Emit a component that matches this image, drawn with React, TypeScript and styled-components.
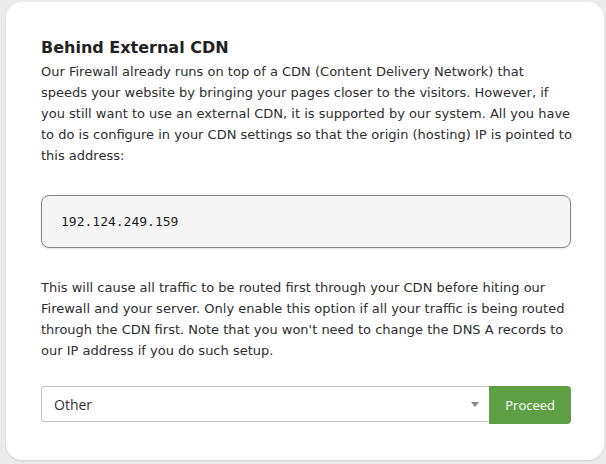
import styled, { createGlobalStyle } from "styled-components";

const GlobalStyle = createGlobalStyle`
  html, body {
    margin: 0;
    padding: 0;
    background: #ebebeb;
  }
  body {
    font-family: "DejaVu Sans", sans-serif;
    color: #2e2e2e;
  }
`;

const Page = styled.div`
  padding: 2px 2px 4px 6px;
`;

const Card = styled.section`
  box-sizing: border-box;
  width: 598px;
  height: 458px;
  background: #ffffff;
  border-radius: 16px;
  box-shadow: 0 1px 2px rgba(0, 0, 0, 0.12);
  padding: 33px 33px 0 35px;
`;

const Title = styled.h2`
  margin: 0;
  font-size: 16px;
  line-height: 26px;
  font-weight: bold;
  color: #222;
`;

// paragraphs run a little wider than the boxes below them
const Text = styled.p`
  margin: 0 -6px 0 0;
  font-size: 13px;
  line-height: 21px;
`;

const AddressBox = styled.div`
  margin: 29px 0 29px;
  height: 53px;
  box-sizing: border-box;
  display: flex;
  align-items: center;
  padding: 0 19px;
  background: #f5f5f5;
  border: 1px solid #858585;
  border-radius: 8px;
  box-shadow: 0 1px 2px rgba(0, 0, 0, 0.1);
  font-family: "DejaVu Sans Mono", monospace;
  font-size: 13px;
  color: #1e1e1e;
`;

const Actions = styled.div`
  display: flex;
  align-items: flex-start;
  margin-top: 25px;
`;

const SelectBox = styled.div`
  flex: 1;
  height: 36px;
  box-sizing: border-box;
  display: flex;
  align-items: center;
  justify-content: space-between;
  padding: 1px 10px 0 12px;
  border: 1px solid #c4c4c4;
  border-right: none;
  border-radius: 4px 0 0 4px;
  font-family: "Open Sans", sans-serif;
  font-size: 14px;
  color: #333;
`;

const Caret = styled.span`
  width: 0;
  height: 0;
  border-left: 4px solid transparent;
  border-right: 4px solid transparent;
  border-top: 5px solid #888;
`;

const ProceedButton = styled.button`
  height: 38px;
  padding: 0 16px;
  border: none;
  border-radius: 0 4px 4px 0;
  background: #5e9f45;
  color: #ffffff;
  font-family: "Open Sans", sans-serif;
  font-size: 13px;
  cursor: pointer;
`;

export default function App() {
  return (
    <Page>
      <GlobalStyle />
      <Card>
        <Title>Behind External CDN</Title>
        <Text>
          Our Firewall already runs on top of a CDN (Content Delivery Network) that<br />
          speeds your website by bringing your pages closer to the visitors. However, if<br />
          you still want to use an external CDN, it is supported by our system. All you have<br />
          to do is configure in your CDN settings so that the origin (hosting) IP is pointed to<br />
          this address:
        </Text>
        <AddressBox>192.124.249.159</AddressBox>
        <Text>
          This will cause all traffic to be routed first through your CDN before hiting our<br />
          Firewall and your server. Only enable this option if all your traffic is being routed<br />
          through the CDN first. Note that you won't need to change the DNS A records to<br />
          our IP address if you do such setup.
        </Text>
        <Actions>
          <SelectBox>
            <span>Other</span>
            <Caret />
          </SelectBox>
          <ProceedButton>Proceed</ProceedButton>
        </Actions>
      </Card>
    </Page>
  );
}
